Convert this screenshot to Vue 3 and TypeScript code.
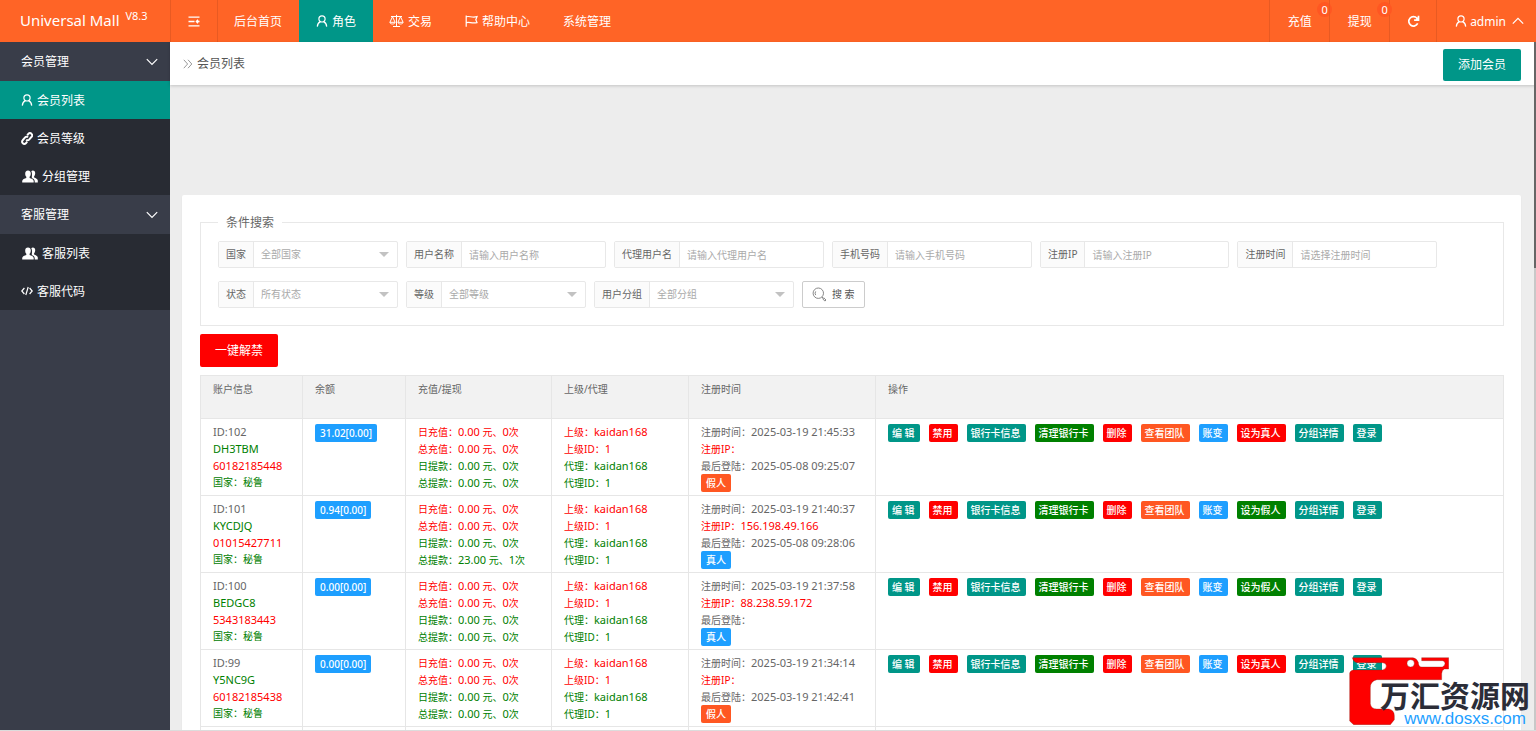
<script setup lang="ts">
import { h } from 'vue'

type IconName = 'user' | 'link' | 'group' | 'code' | 'scale' | 'flag' | 'menu' | 'refresh' | 'down' | 'up' | 'crumb' | 'search'

interface Glyph {
  w: number
  hgt: number
  d: string
  stroke?: number
}

const glyphs: Record<IconName, Glyph> = {
  user: { w: 12, hgt: 12, stroke: 1.2, d: 'M6 .8a3.1 3.1 0 1 1 0 6.2a3.1 3.1 0 1 1 0-6.2M4.4 6.6C2.5 7.4 1.5 9 1.3 11.6M7.6 6.6C9.5 7.4 10.5 9 10.7 11.6' },
  link: { w: 12, hgt: 13, stroke: 2, d: 'M5.2 7.6a2 2 0 0 0 2.9 0l2.5-2.8a2 2 0 0 0 0-2.9l-.2-.2a2 2 0 0 0-2.9 0L6.200 3.300M7 5.400a2 2 0 0 0-2.900 0L1.700 8.200a2 2 0 0 0 0 2.900l.2.2a2 2 0 0 0 2.900 0l1.400-1.600' },
  group: { w: 17, hgt: 13, d: 'M7 .5c1.900 0 2.900 1.300 2.800 3.200-.1 1.500-.6 2.500-1.200 3.100v1.200c1.800.8 4 1.200 4.100 3v1.500H1.200V11c.1-1.800 2.300-2.200 4.100-3V6.800C4.700 6.200 4.200 5.200 4.200 3.700C4.100 1.800 5.100 .5 7 .5M10.300 1.200c.4-.4 1-.6 1.500-.6 1.600 0 2.500 1.200 2.400 2.900-.1 1.300-.5 2.200-1.100 2.800v1.300c1.600.8 3.600 1.200 3.700 3v1.900h-3.100V11c-.1-1.600-1.500-2.400-2.900-3 .1-.5.2-.9 0-1.200C11.200 4.800 11.200 2.800 10.300 1.200' },
  code: { w: 12, hgt: 12, stroke: 1.200, d: 'M3.400 3L.8 6l2.600 3M8.600 3l2.600 3-2.600 3M7.200 2L4.800 10' },
  scale: { w: 15, hgt: 14, stroke: 1, d: 'M7.500 .8V12M2 2.500h11M4 12.500h7M3.500 2.700L.9 8.300h5.200zM11.500 2.700L8.900 8.300h5.200zM.9 8.500c.6 2 4.600 2 5.200 0M8.900 8.500c.6 2 4.600 2 5.200 0' },
  flag: { w: 13, hgt: 12, stroke: 1.200, d: 'M1.200 .5v11.300M1.500 1.700c3-1 5 1.300 10.500 0L10.800 4.700l1.200 2.900c-5 1.300-7.500-1-10.500 0' },
  menu: { w: 12, hgt: 11, stroke: 1.300, d: 'M.5 1.200h11M.5 5.500h6M.5 9.800h11M11.500 5.500h-3M10 3.700L8.300 5.500L10 7.300' },
  refresh: { w: 13, hgt: 13, stroke: 1.700, d: 'M10.700 8.400a4.700 4.700 0 1 1-.7-5.200M11.500 .8v4.400H7.100M9.500 4.500L11.500 2.500' },
  down: { w: 12, hgt: 8, stroke: 1.200, d: 'M.8 1.200L6 6.400l5.200-5.200' },
  up: { w: 12, hgt: 8, stroke: 1.200, d: 'M.8 6.600L6 1.400l5.200 5.200' },
  crumb: { w: 10, hgt: 10, stroke: 1, d: 'M.8 .8L4.600 5L.8 9.200M5 .8L8.800 5L5 9.200' },
  search: { w: 15, hgt: 15, stroke: 1, d: 'M6.300 1a5.200 5.200 0 1 1 0 10.400a5.200 5.200 0 1 1 0-10.400M3.700 4.400a3.200 3.200 0 0 0 0 3.700M10 10l1.500 1.500M11.700 10.800l2.300 2.200-1.100 1.100-2.200-2.300z' },
}

const Icon = (props: { name: IconName }) => {
  const g = glyphs[props.name]
  return h('svg', { width: g.w, height: g.hgt, viewBox: `0 0 ${g.w} ${g.hgt}`, 'aria-hidden': 'true' }, [
    h('path', g.stroke
      ? { d: g.d, fill: 'none', stroke: 'currentColor', 'stroke-width': g.stroke }
      : { d: g.d, fill: 'currentColor' }),
  ])
}
Icon.props = ['name']

const nav: { text: string; icon?: IconName; active?: boolean }[] = [
  { text: '后台首页' },
  { text: '角色', icon: 'user', active: true },
  { text: '交易', icon: 'scale' },
  { text: '帮助中心', icon: 'flag' },
  { text: '系统管理' },
]

const menu: { title: string; items: { text: string; icon: IconName; active?: boolean }[] }[] = [
  {
    title: '会员管理',
    items: [
      { text: '会员列表', icon: 'user', active: true },
      { text: '会员等级', icon: 'link' },
      { text: '分组管理', icon: 'group' },
    ],
  },
  {
    title: '客服管理',
    items: [
      { text: '客服列表', icon: 'group' },
      { text: '客服代码', icon: 'code' },
    ],
  },
]

const fields: { id: string; label: string; hint: string; select?: boolean }[][] = [
  [
    { id: 'country', label: '国家', hint: '全部国家', select: true },
    { id: 'username', label: '用户名称', hint: '请输入用户名称' },
    { id: 'agent', label: '代理用户名', hint: '请输入代理用户名' },
    { id: 'phone', label: '手机号码', hint: '请输入手机号码' },
    { id: 'ip', label: '注册IP', hint: '请输入注册IP' },
    { id: 'regtime', label: '注册时间', hint: '请选择注册时间' },
  ],
  [
    { id: 'status', label: '状态', hint: '所有状态', select: true },
    { id: 'level', label: '等级', hint: '全部等级', select: true },
    { id: 'grouping', label: '用户分组', hint: '全部分组', select: true },
  ],
]

interface Member {
  id: number
  code: string
  phone: string
  balance: string
  out: string
  outTimes: number
  reg: string
  ip: string
  last: string
  real: boolean
}

const members: Member[] = [
  { id: 102, code: 'DH3TBM', phone: '60182185448', balance: '31.02[0.00]', out: '0.00', outTimes: 0, reg: '2025-03-19 21:45:33', ip: '', last: '2025-05-08 09:25:07', real: false },
  { id: 101, code: 'KYCDJQ', phone: '01015427711', balance: '0.94[0.00]', out: '23.00', outTimes: 1, reg: '2025-03-19 21:40:37', ip: '156.198.49.166', last: '2025-05-08 09:28:06', real: true },
  { id: 100, code: 'BEDGC8', phone: '5343183443', balance: '0.00[0.00]', out: '0.00', outTimes: 0, reg: '2025-03-19 21:37:58', ip: '88.238.59.172', last: '', real: true },
  { id: 99, code: 'Y5NC9G', phone: '60182185438', balance: '0.00[0.00]', out: '0.00', outTimes: 0, reg: '2025-03-19 21:34:14', ip: '', last: '2025-03-19 21:42:41', real: false },
]

const actions = (m: Member) => [
  { text: '编 辑', tone: 'teal' },
  { text: '禁用', tone: 'red' },
  { text: '银行卡信息', tone: 'teal' },
  { text: '清理银行卡', tone: 'green' },
  { text: '删除', tone: 'red' },
  { text: '查看团队', tone: 'orange' },
  { text: '账变', tone: 'blue' },
  m.real ? { text: '设为假人', tone: 'green' } : { text: '设为真人', tone: 'red' },
  { text: '分组详情', tone: 'teal' },
  { text: '登录', tone: 'teal' },
]
</script>

<template>
  <div class="app">
    <header class="top">
      <a href="#" class="logo">Universal Mall <sup>V8.3</sup></a>
      <button class="cell toggle" aria-label="菜单"><Icon name="menu" /></button>
      <nav class="nav">
        <a v-for="n in nav" :key="n.text" href="#" :class="['nav-item', { active: n.active }]">
          <Icon v-if="n.icon" :name="n.icon" />{{ n.text }}
        </a>
      </nav>
      <a href="#" class="cell money">充值<span class="dot">0</span></a>
      <a href="#" class="cell money">提现<span class="dot">0</span></a>
      <button class="cell toggle" aria-label="刷新"><Icon name="refresh" /></button>
      <a href="#" class="cell account"><Icon name="user" />admin<Icon name="up" class="caret" /></a>
    </header>

    <div class="body">
      <aside class="side">
        <section v-for="g in menu" :key="g.title">
          <button class="side-title">{{ g.title }}<Icon name="down" /></button>
          <a v-for="i in g.items" :key="i.text" href="#" :class="['side-item', { active: i.active }]">
            <Icon :name="i.icon" />{{ i.text }}
          </a>
        </section>
      </aside>

      <main class="main">
        <div class="crumbs">
          <Icon name="crumb" class="crumb-icon" /><span>会员列表</span>
          <button class="btn teal">添加会员</button>
        </div>
        <div class="scroll">
          <div class="panel">
            <fieldset class="filters">
              <legend>条件搜索</legend>
              <div v-for="(row, r) in fields" :key="r" class="filter-row">
                <div v-for="f in row" :key="f.id" class="field">
                  <label :for="f.id">{{ f.label }}</label>
                  <div v-if="f.select" class="picker">
                    <select :id="f.id"><option>{{ f.hint }}</option></select>
                  </div>
                  <input v-else :id="f.id" type="text" :placeholder="f.hint" />
                </div>
                <button v-if="r === 1" class="search"><Icon name="search" />搜 索</button>
              </div>
            </fieldset>

            <button class="btn red unban">一键解禁</button>

            <table>
              <colgroup>
                <col class="c-user" /><col class="c-bal" /><col class="c-flow" /><col class="c-up" /><col class="c-time" /><col />
              </colgroup>
              <thead>
                <tr>
                  <th>账户信息</th><th>余额</th><th>充值/提现</th><th>上级/代理</th><th>注册时间</th><th>操作</th>
                </tr>
              </thead>
              <tbody>
                <tr v-for="m in members" :key="m.id">
                  <td>
                    <div class="num">ID:{{ m.id }}</div>
                    <div class="num g">{{ m.code }}</div>
                    <div class="num r">{{ m.phone }}</div>
                    <div class="g">国家：秘鲁</div>
                  </td>
                  <td><div class="ops"><span class="tag blue">{{ m.balance }}</span></div></td>
                  <td>
                    <div class="r">日充值：<span class="num">0.00</span> 元、<span class="num">0</span>次</div>
                    <div class="r">总充值：<span class="num">0.00</span> 元、<span class="num">0</span>次</div>
                    <div class="g">日提款：<span class="num">0.00</span> 元、<span class="num">0</span>次</div>
                    <div class="g">总提款：<span class="num">{{ m.out }}</span> 元、<span class="num">{{ m.outTimes }}</span>次</div>
                  </td>
                  <td>
                    <div class="r">上级：<span class="num">kaidan168</span></div>
                    <div class="r">上级ID：<span class="num">1</span></div>
                    <div class="g">代理：<span class="num">kaidan168</span></div>
                    <div class="g">代理ID：<span class="num">1</span></div>
                  </td>
                  <td>
                    <div>注册时间：<span class="num">{{ m.reg }}</span></div>
                    <div class="r">注册IP：<span class="num">{{ m.ip }}</span></div>
                    <div>最后登陆：<span class="num">{{ m.last }}</span></div>
                    <div><span :class="['tag', m.real ? 'blue' : 'orange']">{{ m.real ? '真人' : '假人' }}</span></div>
                  </td>
                  <td>
                    <div class="ops">
                      <button v-for="a in actions(m)" :key="a.text" :class="['tag', a.tone]">{{ a.text }}</button>
                    </div>
                  </td>
                </tr>
                <tr class="more"><td v-for="n in 6" :key="n"></td></tr>
              </tbody>
            </table>
          </div>
        </div>
        <div class="track"><div class="thumb"></div></div>
      </main>
    </div>

    <div class="mark">
      <svg class="mark-shape" width="100" height="68" viewBox="56 50 300 204" aria-hidden="true">
        <path
          fill="#fe0000" stroke="#7c2a1c" stroke-width="1" fill-rule="evenodd"
          d="M66 52H248Q260 54 264 66Q264 80 274 80H336Q344 76 344 70Q344 62 336 61H274V52H355V86H342Q334 90 334 100V118H140Q120 122 120 142V190Q122 206 140 206H176Q192 210 192 226V238L180 253H70L58 242V98Q60 90 70 89H156Q168 86 168 77Q168 68 156 67H80Q68 64 66 52ZM241 58a11 11 0 1 0 0 22a11 11 0 1 0 0-22Z"
        />
      </svg>
      <div class="mark-name">万汇资源网</div>
      <div class="mark-url">www.dosxs.com</div>
    </div>
  </div>
</template>

<style>
body {
  margin: 0;
  overflow: hidden;
}
</style>

<style scoped>
* {
  box-sizing: border-box;
}
.app {
  position: relative;
  display: flex;
  flex-direction: column;
  height: 100vh;
  overflow: hidden;
  border-bottom: 1px solid #dcdcdc;
  background: #ededed;
  color: #666;
  font: 12px/17px "Noto Sans", "Noto Sans CJK SC", sans-serif;
}
a {
  color: inherit;
  text-decoration: none;
}
button,
input,
select {
  margin: 0;
  padding: 0;
  border: 0;
  font: inherit;
  color: inherit;
  background: none;
}
svg {
  flex: none;
}
.top {
  display: flex;
  flex: none;
  height: 42px;
  background: #ff6426;
  color: #fff;
}
.logo {
  width: 170px;
  padding-left: 20px;
  font-size: 15px;
  line-height: 41px;
  white-space: nowrap;
}
.logo sup {
  margin-left: 2px;
  font-size: 11px;
  line-height: 11px;
}
.cell {
  display: flex;
  align-items: center;
  justify-content: center;
  border-left: 1px solid #e85a22;
}
.toggle {
  width: 47px;
}
.nav {
  display: flex;
  flex: 1;
  border-left: 1px solid #e85a22;
}
.nav-item {
  display: flex;
  align-items: center;
  gap: 4px;
  padding: 0 17px 0 16px;
}
.nav-item.active {
  padding: 0 17px;
  background: #009688;
}
.money {
  position: relative;
  width: 60px;
}
.dot {
  position: absolute;
  top: 2px;
  right: -3px;
  width: 15px;
  height: 15px;
  border-radius: 8px;
  background: #ff5722;
  font-size: 11px;
  line-height: 15px;
  text-align: center;
}
.account {
  gap: 3px;
  padding: 0 12px 0 18px;
}
.caret {
  margin-left: 3px;
}
.body {
  display: flex;
  flex: 1;
  min-height: 0;
}
.side {
  width: 170px;
  flex: none;
  background: #393d49;
  color: #fff;
}
.side-title,
.side-item {
  display: flex;
  align-items: center;
  width: 100%;
  padding: 0 12px 0 21px;
}
.side-title {
  justify-content: space-between;
  height: 39px;
}
.side-item {
  gap: 4px;
  height: 38px;
  background: #282b33;
}
.side-item.active {
  background: #009688;
}
.main {
  position: relative;
  display: flex;
  flex: 1;
  flex-direction: column;
  min-width: 0;
}
.crumbs {
  position: relative;
  display: flex;
  align-items: center;
  gap: 4px;
  flex: none;
  height: 43px;
  padding: 0 15px 0 13px;
  background: #fff;
  box-shadow: 0 1px 3px rgba(0, 0, 0, 0.18);
  color: #555;
}
.crumb-icon {
  color: #999;
}
.crumbs .btn {
  margin: 2px 0 0 auto;
}
.btn {
  height: 32px;
  padding: 0 15px;
  border-radius: 2px;
  color: #fff;
}
.teal {
  background: #009688;
}
.red {
  background: #ff0000;
}
.green {
  background: #008000;
}
.orange {
  background: #ff5722;
}
.blue {
  background: #1e9fff;
}
.scroll {
  flex: 1;
  overflow: hidden;
  padding: 110px 15px 0 12px;
}
.panel {
  padding: 19px 17px 0 18px;
  min-height: 600px;
  background: #fff;
  border-radius: 2px;
  box-shadow: 0 1px 2px rgba(0, 0, 0, 0.05);
}
.filters {
  margin: 0;
  padding: 10px 17px 17px;
  border: 1px solid #e8e8e8;
}
.filters legend {
  padding: 0 8px;
}
.filter-row {
  display: flex;
  flex-wrap: wrap;
  gap: 8px;
  height: 27px;
  font-size: 10px;
}
.filter-row + .filter-row {
  margin-top: 13px;
}
.field {
  display: flex;
  height: 27px;
  border: 1px solid #e8e8e8;
  border-radius: 2px;
}
.field label {
  padding: 0 7px;
  border-right: 1px solid #e8e8e8;
  background: #fbfbfb;
  line-height: 25px;
}
.field input,
.picker {
  width: 143px;
  height: 25px;
}
.field input {
  padding: 0 7px;
}
.field input::placeholder {
  color: #aaa;
  opacity: 1;
}
.picker {
  position: relative;
}
.picker select {
  width: 100%;
  height: 100%;
  padding: 0 7px;
  appearance: none;
  color: #aaa;
}
.picker::after {
  content: "";
  position: absolute;
  top: 10px;
  right: 8px;
  border: 5px solid transparent;
  border-top-color: #c2c2c2;
  border-bottom: 0;
}
.search {
  display: flex;
  align-items: center;
  gap: 5px;
  height: 27px;
  padding: 0 9px;
  border: 1px solid #ccc;
  border-radius: 2px;
  color: #555;
}
.search svg {
  color: #888;
}
.unban {
  display: block;
  height: 33px;
  margin: 8px 0;
}
table {
  width: 100%;
  border-collapse: collapse;
  table-layout: fixed;
  font-size: 10px;
}
.c-user {
  width: 102px;
}
.c-bal {
  width: 103px;
}
.c-flow {
  width: 146px;
}
.c-up {
  width: 137px;
}
.c-time {
  width: 187px;
}
th,
td {
  padding: 4px 12px;
  border: 1px solid #e6e6e6;
  text-align: left;
  vertical-align: top;
  font-weight: 400;
  white-space: nowrap;
}
th {
  height: 43px;
  padding-top: 5px;
  background: #f2f2f2;
}
td > div {
  height: 17px;
}
.num {
  font-size: 11px;
}
.r {
  color: #ff0000;
}
.g {
  color: #008000;
}
.tag {
  display: inline-block;
  height: 18px;
  padding: 0 5px;
  border-radius: 2px;
  color: #fff;
  font-weight: 500;
  line-height: 18px;
}
.ops {
  display: flex;
  gap: 9px;
  padding-top: 1px;
}
.ops button {
  padding: 0 5px 0 4px;
}
.more td {
  height: 77px;
}
.track {
  position: absolute;
  top: 0;
  right: 0;
  bottom: 0;
  width: 2px;
  background: #c8c8c8;
}
.thumb {
  height: 226px;
  background: #666;
}
.mark {
  position: absolute;
  right: 6px;
  bottom: 0;
  display: flex;
  flex-direction: column;
  align-items: flex-end;
  width: 181px;
  padding: 24px 0 3px;
}
.mark-shape {
  position: absolute;
  top: 0;
  left: 0;
}
.mark-name {
  position: relative;
  color: #2b2d38;
  font-size: 30px;
  font-weight: 700;
  line-height: 30px;
}
.mark-url {
  position: relative;
  padding-right: 4px;
  color: #1e9fff;
  font: 17px/16px "Liberation Sans", sans-serif;
}
</style>
